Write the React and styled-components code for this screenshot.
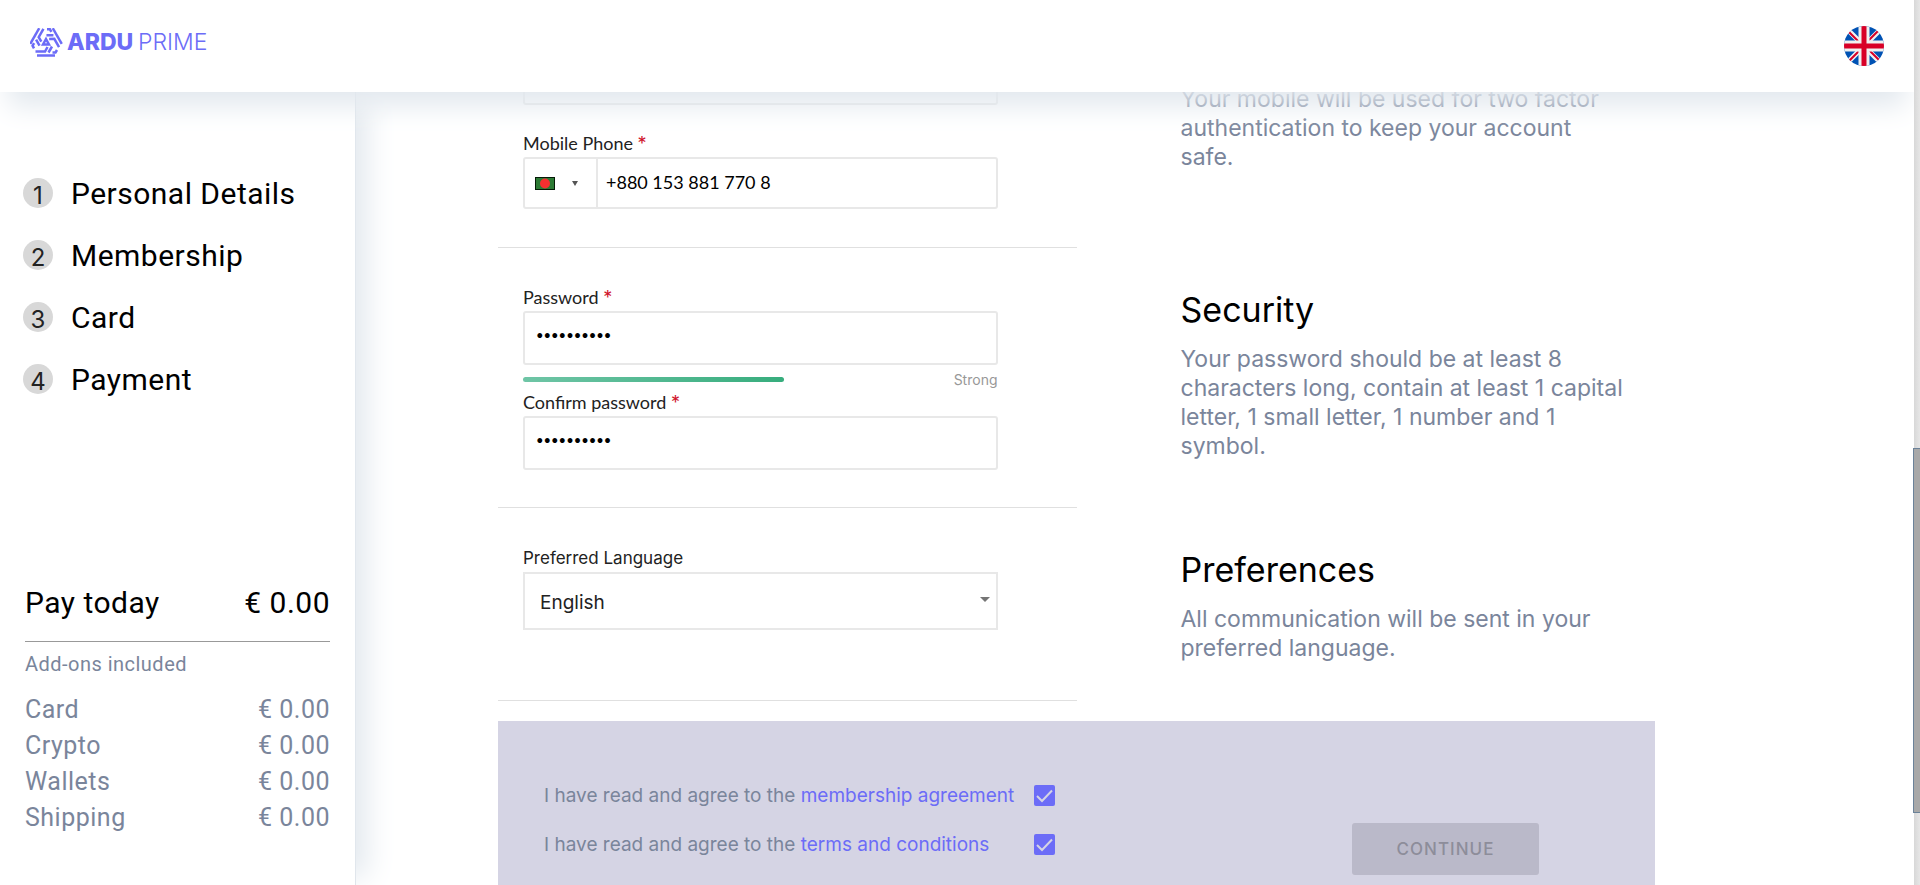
import React from "react";
import styled, { createGlobalStyle } from "styled-components";

const ui = `Inter, "Open Sans", sans-serif`;
const humanist = `Lato, "Open Sans", sans-serif`;
const roboto = `Roboto, "Liberation Sans", sans-serif`;

const GlobalStyle = createGlobalStyle`
  *, *::before, *::after { box-sizing: border-box; }
  body { margin: 0; background: #fff; color: #000; font-family: ${ui}; }
  h2, p, ol { margin: 0; padding: 0; }
`;

const Shell = styled.div`
  display: flex;
  height: 100vh;
  overflow: hidden;
`;

const Page = styled.div`
  flex: 1;
  min-width: 0;
  display: flex;
  flex-direction: column;
  overflow: hidden;
`;

const Header = styled.header`
  flex: none;
  display: flex;
  justify-content: space-between;
  align-items: center;
  height: 92px;
  padding: 0 30px;
  background: #fff;
  box-shadow: 0 22px 28px -8px #e2e8ee;
  position: relative;
  z-index: 3;
`;

const Brand = styled.a`
  display: block;
  height: 36px;
`;

const LanguageButton = styled.button`
  width: 40px;
  height: 40px;
  padding: 0;
  border: 0;
  border-radius: 50%;
  overflow: hidden;
  background: none;
`;

const Body = styled.div`
  flex: 1;
  min-height: 0;
  display: flex;
`;

const Sidebar = styled.aside`
  flex: none;
  width: 355px;
  display: flex;
  flex-direction: column;
  justify-content: space-between;
  padding: 71px 25px 49px 23px;
  background: #fff;
  font-family: ${roboto};
  letter-spacing: 0.03em;
  box-shadow: 20px 0 28px -8px #e2e8ee, 1px 0 0 #dfe4ea;
  position: relative;
  z-index: 2;
`;

const Steps = styled.ol`
  list-style: none;
  display: flex;
  flex-direction: column;
  gap: 2px;
`;

const Step = styled.li`
  display: flex;
  align-items: center;
  gap: 18px;
  height: 60px;
  font-size: 30px;
`;

const StepNumber = styled.span`
  width: 30px;
  height: 30px;
  padding-top: 3px;
  border-radius: 50%;
  background: #d8d8d8;
  color: #222;
  font: 24px/30px ${ui};
  letter-spacing: 0;
  text-align: center;
`;

const Summary = styled.section`
  padding-left: 2px;
`;

const Total = styled.div`
  display: flex;
  justify-content: space-between;
  padding-bottom: 18px;
  border-bottom: 1px solid #999;
  font-size: 30px;
  line-height: 40px;
`;

const AddOnsTitle = styled.p`
  margin: 10px 0 16px;
  color: #7a859b;
  font-size: 20px;
  line-height: 24px;
`;

const AddOn = styled.div`
  display: flex;
  justify-content: space-between;
  color: #7a859b;
  font-size: 25px;
  line-height: 36px;
  letter-spacing: 0.02em;
`;

const Main = styled.main`
  flex: 1;
  min-width: 0;
  overflow-y: auto;
  scrollbar-width: none;
`;

const Form = styled.form`
  display: flex;
  flex-direction: column;
  min-height: calc(100% + 41px);
  margin: -41px 259px 0 143px;
`;

const Row = styled.section`
  display: grid;
  grid-template-columns: 1fr 1fr;
`;

const Fields = styled.div`
  padding: ${(p) => p.$top}px 79px ${(p) => p.$bottom}px 25px;
  border-bottom: 1px solid #e0e0e0;
`;

const Help = styled.div`
  padding: ${(p) => p.$top}px 30px 0 104px;
`;

const HelpTitle = styled.h2`
  margin-bottom: 13px;
  font-size: 34px;
  font-weight: 400;
  line-height: 44px;
`;

const HelpText = styled.p`
  color: #7a859b;
  font-size: 23px;
  line-height: 29px;
`;

const Field = styled.div`
  margin-top: ${(p) => p.$gap || 0}px;
`;

const Label = styled.label`
  display: block;
  margin-bottom: 2px;
  color: #222;
  font-family: ${(p) => (p.$plain ? ui : humanist)};
  font-size: ${(p) => (p.$plain ? 17 : 18)}px;
  line-height: 24px;
`;

const Required = styled.span`
  color: #d0142c;
  font-family: ${ui};
  line-height: 1;
`;

const TextInput = styled.input`
  display: block;
  width: 100%;
  height: 54px;
  padding: 0 11px 6px;
  border: 2px solid #e8e8e8;
  border-radius: 3px;
  background: #fff;
  color: #000;
  font: 18px/24px ${humanist};
  outline: 0;

  &[type="password"] { font-size: 13px; }
`;

const PhoneBox = styled.div`
  display: flex;
  height: 52px;
  border: 2px solid #e8e8e8;
  border-radius: 3px;
`;

const CountryButton = styled.button`
  display: flex;
  align-items: center;
  gap: 17px;
  width: 73px;
  padding: 0 0 0 10px;
  border: 0;
  border-right: 2px solid #e8e8e8;
  background: none;
`;

const PhoneInput = styled.input`
  flex: 1;
  min-width: 0;
  padding: 0 8px 2px;
  border: 0;
  background: none;
  color: #000;
  font: 18px/24px ${humanist};
  outline: 0;
`;

const Strength = styled.div`
  display: flex;
  justify-content: space-between;
  align-items: center;
  height: 25px;
  padding-top: 4px;
  color: #989898;
  font: 14px/20px ${ui};
`;

const StrengthBar = styled.div`
  width: 55%;
  height: 5px;
  border-radius: 3px;
  background: linear-gradient(90deg, #6fc5a6, #37ad7d);
`;

const SelectBox = styled.div`
  display: grid;
  align-items: center;
  border: 2px solid #e8e8e8;

  & > * { grid-area: 1 / 1; }
  & > svg { justify-self: end; margin: 0 6px 4px 0; pointer-events: none; }
`;

const Select = styled.select`
  width: 100%;
  height: 54px;
  padding: 3px 15px 0;
  border: 0;
  background: none;
  color: #222;
  font: 19px/24px ${ui};
  appearance: none;
`;

const Agreement = styled.section`
  flex: 1;
  display: grid;
  grid-template-columns: 1fr 1fr;
  margin-top: 20px;
  background: #d5d4e4;
`;

const Consents = styled.div`
  display: flex;
  flex-direction: column;
  gap: 21px;
  padding: 60px 22px 20px 46px;
`;

const Consent = styled.div`
  display: flex;
  justify-content: space-between;
  align-items: center;
  height: 28px;
  color: #7a859b;
  font-size: 19px;
`;

const ConsentLink = styled.a`
  color: #6c6cf7;
  text-decoration: none;
`;

const Checkbox = styled.input`
  appearance: none;
  width: 21px;
  height: 21px;
  margin: 0;
`;

const CheckWrap = styled.span`
  display: grid;
  & > * { grid-area: 1 / 1; }
  & > svg { pointer-events: none; }
`;

const Actions = styled.div`
  padding: 102px 116px 10px;
  display: flex;
  justify-content: flex-end;
  align-items: flex-start;
`;

const ContinueButton = styled.button`
  width: 187px;
  height: 52px;
  border: 0;
  border-radius: 3px;
  background: #bab9c9;
  color: #8d8d9a;
  font: 500 17px/24px ${ui};
  letter-spacing: 1px;
`;

const ScrollTrack = styled.div`
  flex: none;
  width: 6px;
  padding-top: 448px;
  background: linear-gradient(90deg, #d8d8d8, #e6e6e6);
  position: relative;
  z-index: 4;
`;

const ScrollThumb = styled.div`
  width: 7px;
  height: 365px;
  margin-left: -1px;
  border: 1px solid #6b8299;
  border-right: 0;
  background: #a8a8a8;
`;

const Wordmark = styled.text`
  fill: #6c6cf7;
  font-family: ${ui};
  font-size: 23px;
  font-weight: ${(p) => p.$weight};
`;

const LogoArm = ({ turn }) => (
  <g transform={`rotate(${turn} 16 14.5)`}>
    <path d="M7 27.500H25" />
    <path d="M5.500 23.500H15L17.500 19" />
    <path d="M18.500 24.500L22 18.500" />
    <path d="M22.500 24.500H25.500L27 22" />
  </g>
);

const Logo = () => (
  <svg width="184" height="29" viewBox="0 0 184 29" role="img" aria-label="Ardu Prime">
    <g fill="none" stroke="#6c6cf7" strokeWidth="2.5">
      <LogoArm turn={0} />
      <LogoArm turn={120} />
      <LogoArm turn={240} />
      <path d="M16 11L19 16.500H13Z" />
    </g>
    <Wordmark x="37" y="22" $weight={800}>ARDU</Wordmark>
    <Wordmark x="108" y="22" $weight={300}>PRIME</Wordmark>
  </svg>
);

const UnionJack = () => (
  <svg width="40" height="40" viewBox="0 0 40 40" role="img" aria-label="English">
    <rect width="40" height="40" fill="#0052b4" />
    <path d="M0 0L40 40M40 0L0 40" stroke="#f0f0f0" strokeWidth="5" />
    <path d="M4 5L18 19M22 21L36 35M35 4L20 19M19 21L5 35" stroke="#d80027" strokeWidth="2" />
    <path d="M20 0V40M0 20H40" stroke="#f0f0f0" strokeWidth="11" />
    <path d="M20 0V40M0 20H40" stroke="#d80027" strokeWidth="5" />
  </svg>
);

const BangladeshFlag = () => (
  <svg width="20" height="13" viewBox="0 0 20 13" aria-hidden="true">
    <rect x="0.5" y="0.5" width="19" height="12" fill="#2c7a34" stroke="#041a06" />
    <circle cx="10" cy="6.500" r="5" fill="#f43030" />
  </svg>
);

const Caret = ({ width, height, color }) => (
  <svg width={width} height={height} viewBox="0 0 10 5" preserveAspectRatio="none" aria-hidden="true">
    <path d="M0 0H10L5 5Z" fill={color} />
  </svg>
);

const PasswordField = ({ id, label }) => (
  <Field>
    <Label htmlFor={id}>{label} <Required>*</Required></Label>
    <TextInput id={id} type="password" defaultValue="Secret#123" />
  </Field>
);

const ConsentRow = ({ id, link }) => (
  <Consent>
    <label htmlFor={id}>I have read and agree to the <ConsentLink href="#">{link}</ConsentLink></label>
    <CheckWrap>
      <Checkbox id={id} type="checkbox" defaultChecked />
      <svg width="21" height="21" viewBox="0 0 21 21" aria-hidden="true">
        <rect width="21" height="21" rx="2" fill="#6c6cf7" />
        <path d="M3 11L8 16L18 5.500" fill="none" stroke="#d5d4e4" strokeWidth="2" />
      </svg>
    </CheckWrap>
  </Consent>
);

const steps = ["Personal Details", "Membership", "Card", "Payment"];
const addOns = ["Card", "Crypto", "Wallets", "Shipping"];

export default function App() {
  return (
    <Shell>
      <GlobalStyle />
      <Page>
        <Header>
          <Brand href="#"><Logo /></Brand>
          <LanguageButton type="button"><UnionJack /></LanguageButton>
        </Header>
        <Body>
          <Sidebar>
            <Steps>
              {steps.map((name, i) => (
                <Step key={name}><StepNumber>{i + 1}</StepNumber>{name}</Step>
              ))}
            </Steps>
            <Summary>
              <Total><span>Pay today</span><span>€ 0.00</span></Total>
              <AddOnsTitle>Add-ons included</AddOnsTitle>
              {addOns.map((name) => (
                <AddOn key={name}><span>{name}</span><span>€ 0.00</span></AddOn>
              ))}
            </Summary>
          </Sidebar>
          <Main>
            <Form>
              <Row>
                <Fields $top={0} $bottom={38}>
                  <TextInput type="email" aria-label="Email" />
                  <Field $gap={26}>
                    <Label htmlFor="phone">Mobile Phone <Required>*</Required></Label>
                    <PhoneBox>
                      <CountryButton type="button" aria-label="Country">
                        <BangladeshFlag />
                        <Caret width={6} height={5} color="#555" />
                      </CountryButton>
                      <PhoneInput id="phone" type="tel" defaultValue="+880 153 881 770 8" />
                    </PhoneBox>
                  </Field>
                </Fields>
                <Help $top={34}>
                  <HelpText>Your mobile will be used for two factor authentication to keep your account safe.</HelpText>
                </Help>
              </Row>
              <Row>
                <Fields $top={37} $bottom={37}>
                  <PasswordField id="password" label="Password" />
                  <Strength><StrengthBar />Strong</Strength>
                  <PasswordField id="confirm" label="Confirm password" />
                </Fields>
                <Help $top={40}>
                  <HelpTitle>Security</HelpTitle>
                  <HelpText>Your password should be at least 8 characters long, contain at least 1 capital letter, 1 small letter, 1 number and 1 symbol.</HelpText>
                </Help>
              </Row>
              <Row>
                <Fields $top={38} $bottom={70}>
                  <Label htmlFor="language" $plain>Preferred Language</Label>
                  <SelectBox>
                    <Select id="language" defaultValue="English"><option>English</option></Select>
                    <Caret width={10} height={5} color="#757575" />
                  </SelectBox>
                </Fields>
                <Help $top={40}>
                  <HelpTitle>Preferences</HelpTitle>
                  <HelpText>All communication will be sent in your preferred language.</HelpText>
                </Help>
              </Row>
              <Agreement>
                <Consents>
                  <ConsentRow id="membership" link="membership agreement" />
                  <ConsentRow id="terms" link="terms and conditions" />
                </Consents>
                <Actions><ContinueButton type="submit" disabled>CONTINUE</ContinueButton></Actions>
              </Agreement>
            </Form>
          </Main>
        </Body>
      </Page>
      <ScrollTrack><ScrollThumb /></ScrollTrack>
    </Shell>
  );
}
